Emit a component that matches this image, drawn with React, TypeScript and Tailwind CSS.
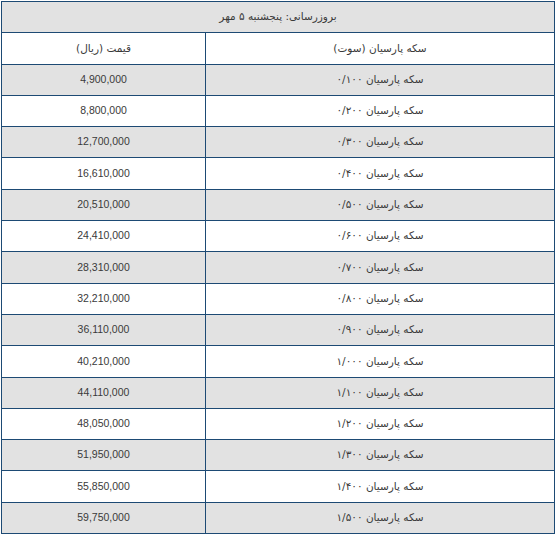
const rows: [string, string][] = [
  ['۰/۱۰۰', '4,900,000'],
  ['۰/۲۰۰', '8,800,000'],
  ['۰/۳۰۰', '12,700,000'],
  ['۰/۴۰۰', '16,610,000'],
  ['۰/۵۰۰', '20,510,000'],
  ['۰/۶۰۰', '24,410,000'],
  ['۰/۷۰۰', '28,310,000'],
  ['۰/۸۰۰', '32,210,000'],
  ['۰/۹۰۰', '36,110,000'],
  ['۱/۰۰۰', '40,210,000'],
  ['۱/۱۰۰', '44,110,000'],
  ['۱/۲۰۰', '48,050,000'],
  ['۱/۳۰۰', '51,950,000'],
  ['۱/۴۰۰', '55,850,000'],
  ['۱/۵۰۰', '59,750,000'],
];

const cell = 'border border-[#1d4a74] text-center align-middle h-[31.3px] p-0';

export default function App() {
  return (
    <div className="bg-white pl-[1px] pt-[1px]" style={{ fontFamily: '"DejaVu Sans", Tahoma, sans-serif' }}>
      <table dir="rtl" className="w-[554px] border-collapse text-[10.5px] text-[#3a3a3a]">
        <tbody>
          <tr className="bg-[#e2e2e2]">
            <td colSpan={2} className={cell}>
              بروزرسانی: پنجشنبه ۵ مهر
            </td>
          </tr>
          <tr className="bg-white">
            <td className={`${cell} w-[349px]`}>سکه پارسیان (سوت)</td>
            <td className={cell}>قیمت (ریال)</td>
          </tr>
          {rows.map(([weight, price], i) => (
            <tr key={weight} className={i % 2 === 0 ? 'bg-[#e2e2e2]' : 'bg-white'}>
              <td className={cell}>سکه پارسیان {weight}</td>
              <td className={`${cell} font-['Liberation_Sans',Arial,sans-serif] text-[10.5px]`}>{price}</td>
            </tr>
          ))}
        </tbody>
      </table>
    </div>
  );
}
